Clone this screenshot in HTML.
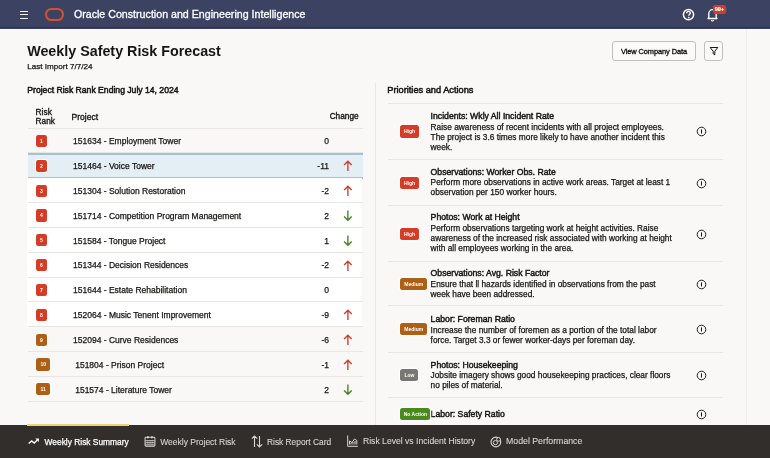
<!DOCTYPE html>
<html><head><meta charset="utf-8"><style>
html,body{margin:0;padding:0;}
body{width:770px;height:458px;position:relative;overflow:hidden;background:#f9f8f6;font-family:"Liberation Sans",sans-serif;}
.t{position:absolute;white-space:nowrap;}
#w{position:absolute;left:0;top:0;width:770px;height:458px;will-change:transform;}
</style></head><body><div id="w">
<div style="position:absolute;left:0px;top:0px;width:770px;height:28.5px;background:#3c4262;"></div>
<div style="position:absolute;left:0px;top:27.4px;width:770px;height:1.1px;background:#2d3250;"></div>
<div style="position:absolute;left:20.3px;top:10.6px;width:8px;height:1.15px;background:#f4f4f6;"></div>
<div style="position:absolute;left:20.3px;top:14.1px;width:8px;height:1.15px;background:#f4f4f6;"></div>
<div style="position:absolute;left:20.3px;top:17.6px;width:8px;height:1.15px;background:#f4f4f6;"></div>
<div style="position:absolute;left:44.8px;top:8.0px;width:19.1px;height:12.8px;box-sizing:border-box;border:2.2px solid #d4502f;border-radius:6.4px;"></div>
<div class="t " style="left:73.90px;top:7.85px;font-size:10.66px;line-height:13.32px;font-weight:400;color:#ffffff;-webkit-text-stroke:0.3px #fff;">Oracle Construction and Engineering Intelligence</div>
<svg style="position:absolute;left:682px;top:7.5px" width="13" height="13" viewBox="0 0 13 13"><circle cx="6.5" cy="6.6" r="5.1" fill="none" stroke="#fff" stroke-width="1.5"/><path d="M4.7 5.3 C4.7 4.0 5.5 3.4 6.5 3.4 C7.6 3.4 8.3 4.1 8.3 5 C8.3 6.2 6.8 6.3 6.8 7.7" fill="none" stroke="#fff" stroke-width="1.4"/><circle cx="6.8" cy="9.5" r="0.85" fill="#fff"/></svg>
<svg style="position:absolute;left:706px;top:8px" width="13" height="14" viewBox="0 0 13 14"><path d="M2 10.5 L2.8 9.3 L2.8 5.8 C2.8 3.5 4.5 1.6 6.5 1.6 C8.5 1.6 10.2 3.5 10.2 5.8 L10.2 9.3 L11 10.5 Z" fill="none" stroke="#fff" stroke-width="1.35" stroke-linejoin="round"/><path d="M5.3 11.8 C5.5 12.6 6 13 6.5 13 C7 13 7.5 12.6 7.7 11.8" fill="none" stroke="#fff" stroke-width="1.1"/></svg>
<div style="position:absolute;left:712.9px;top:5.4px;width:13px;height:8.2px;background:#d63b25;border-radius:2px;"></div>
<div class="t " style="left:719.40px;top:6.26px;font-size:5.6px;line-height:7.0px;font-weight:700;color:#fff;transform:translateX(-50%);-webkit-text-stroke:0.15px #fff;">99+</div>
<div style="position:absolute;left:746.0px;top:28.5px;width:1px;height:396px;background:#efedea;"></div>
<div class="t " style="left:27.20px;top:42.81px;font-size:14.3px;line-height:17.88px;font-weight:700;color:#161513;">Weekly Safety Risk Forecast</div>
<div class="t " style="left:27.30px;top:62.24px;font-size:8.09px;line-height:10.11px;font-weight:400;color:#161513;-webkit-text-stroke:0.25px #161513;">Last Import 7/7/24</div>
<div style="position:absolute;left:612.4px;top:41.3px;width:83.6px;height:19.4px;box-sizing:border-box;border:1.2px solid #c2bfbb;border-radius:3px;background:#fbfaf9;"></div>
<div class="t " style="left:621.00px;top:47.16px;font-size:7.45px;line-height:9.31px;font-weight:400;color:#161513;-webkit-text-stroke:0.35px #161513;letter-spacing:-0.1px;">View Company Data</div>
<div style="position:absolute;left:704.2px;top:41.3px;width:19.2px;height:19.4px;box-sizing:border-box;border:1.2px solid #c2bfbb;border-radius:3px;background:#fbfaf9;"></div>
<svg style="position:absolute;left:708.5px;top:46px" width="10" height="10" viewBox="0 0 10 10"><path d="M1.2 1.5 L8.8 1.5 L5.8 5.2 L5.8 8.8 L4.2 7.8 L4.2 5.2 Z" fill="none" stroke="#161513" stroke-width="1" stroke-linejoin="round"/></svg>
<div class="t " style="left:27.30px;top:84.73px;font-size:8.62px;line-height:10.77px;font-weight:400;color:#161513;-webkit-text-stroke:0.5px #161513;">Project Risk Rank Ending July 14, 2024</div>
<div style="position:absolute;left:374.8px;top:83px;width:1px;height:342px;background:#e9e7e4;"></div>
<div class="t " style="left:387.30px;top:84.54px;font-size:9.22px;line-height:11.53px;font-weight:400;color:#161513;-webkit-text-stroke:0.5px #161513;">Priorities and Actions</div>
<div style="position:absolute;left:388px;top:103.2px;width:335px;height:1px;background:#e9e7e4;"></div>
<div class="t " style="left:35.60px;top:106.69px;font-size:8.35px;line-height:10.44px;font-weight:400;color:#161513;-webkit-text-stroke:0.35px #161513;">Risk</div>
<div class="t " style="left:35.60px;top:116.89px;font-size:8.25px;line-height:10.31px;font-weight:400;color:#161513;-webkit-text-stroke:0.35px #161513;">Rank</div>
<div class="t " style="left:71.60px;top:111.73px;font-size:8.51px;line-height:10.64px;font-weight:400;color:#161513;-webkit-text-stroke:0.35px #161513;">Project</div>
<div class="t " style="right:411.40px;text-align:right;top:112.06px;font-size:8.27px;line-height:10.34px;font-weight:400;color:#161513;-webkit-text-stroke:0.35px #161513;">Change</div>
<div style="position:absolute;left:27.5px;top:127.6px;width:335px;height:1px;background:#e9e7e4;"></div>
<div style="position:absolute;left:27.5px;top:152.43px;width:335px;height:1px;background:#e9e7e4;"></div>
<div style="position:absolute;left:35.9px;top:134.9px;width:11.1px;height:12.2px;box-sizing:border-box;background:#d63b25;border-radius:2.2px;box-shadow:0 0 0 1px #fff;"></div>
<div class="t" style="left:35.9px;width:11.1px;top:134.9px;height:12.2px;line-height:12.2px;font-size:5px;font-weight:700;color:#fff;text-align:center;">1</div>
<div class="t " style="left:73.00px;top:136.24px;font-size:8.5px;line-height:10.62px;font-weight:400;color:#161513;-webkit-text-stroke:0.25px #161513;">151634 - Employment Tower</div>
<div class="t " style="right:441.00px;text-align:right;top:136.24px;font-size:8.5px;line-height:10.62px;font-weight:400;color:#161513;-webkit-text-stroke:0.25px #161513;">0</div>
<div style="position:absolute;left:27.5px;top:152.93px;width:335px;height:24.83px;background:#e4eff5;"></div>
<div style="position:absolute;left:27.5px;top:153.03px;width:335px;height:1.5px;background:#a2c3d3;"></div>
<div style="position:absolute;left:27.5px;top:177.16px;width:335px;height:1.5px;background:#a2c3d3;"></div>
<div style="position:absolute;left:35.9px;top:159.73000000000002px;width:11.1px;height:12.2px;box-sizing:border-box;background:#d63b25;border-radius:2.2px;box-shadow:0 0 0 1px #fff;"></div>
<div class="t" style="left:35.9px;width:11.1px;top:159.73000000000002px;height:12.2px;line-height:12.2px;font-size:5px;font-weight:700;color:#fff;text-align:center;">2</div>
<div class="t " style="left:73.00px;top:161.07px;font-size:8.5px;line-height:10.62px;font-weight:400;color:#161513;-webkit-text-stroke:0.25px #161513;">151464 - Voice Tower</div>
<div class="t " style="right:441.00px;text-align:right;top:161.07px;font-size:8.5px;line-height:10.62px;font-weight:400;color:#161513;-webkit-text-stroke:0.25px #161513;">-11</div>
<svg style="position:absolute;left:342.8px;top:160.43px" width="10" height="12" viewBox="0 0 10 12"><path d="M4.9 10.9 L4.9 1.2 M1.1 5.0 L4.9 1.2 L8.7 5.0" fill="none" stroke="#cc3f2a" stroke-width="1.35"/></svg>
<div style="position:absolute;left:27.3px;top:178.26px;width:335px;height:24.83px;background:#ffffff;"></div>
<div style="position:absolute;left:27.5px;top:202.08999999999997px;width:335px;height:1px;background:#e9e7e4;"></div>
<div style="position:absolute;left:35.9px;top:184.56px;width:11.1px;height:12.2px;box-sizing:border-box;background:#d63b25;border-radius:2.2px;box-shadow:0 0 0 1px #fff;"></div>
<div class="t" style="left:35.9px;width:11.1px;top:184.56px;height:12.2px;line-height:12.2px;font-size:5px;font-weight:700;color:#fff;text-align:center;">3</div>
<div class="t " style="left:73.00px;top:185.90px;font-size:8.5px;line-height:10.62px;font-weight:400;color:#161513;-webkit-text-stroke:0.25px #161513;">151304 - Solution Restoration</div>
<div class="t " style="right:441.00px;text-align:right;top:185.90px;font-size:8.5px;line-height:10.62px;font-weight:400;color:#161513;-webkit-text-stroke:0.25px #161513;">-2</div>
<svg style="position:absolute;left:342.8px;top:185.26px" width="10" height="12" viewBox="0 0 10 12"><path d="M4.9 10.9 L4.9 1.2 M1.1 5.0 L4.9 1.2 L8.7 5.0" fill="none" stroke="#cc3f2a" stroke-width="1.35"/></svg>
<div style="position:absolute;left:27.3px;top:203.08999999999997px;width:335px;height:24.83px;background:#ffffff;"></div>
<div style="position:absolute;left:27.5px;top:226.91999999999996px;width:335px;height:1px;background:#e9e7e4;"></div>
<div style="position:absolute;left:35.9px;top:209.39px;width:11.1px;height:12.2px;box-sizing:border-box;background:#d63b25;border-radius:2.2px;box-shadow:0 0 0 1px #fff;"></div>
<div class="t" style="left:35.9px;width:11.1px;top:209.39px;height:12.2px;line-height:12.2px;font-size:5px;font-weight:700;color:#fff;text-align:center;">4</div>
<div class="t " style="left:73.00px;top:210.73px;font-size:8.5px;line-height:10.62px;font-weight:400;color:#161513;-webkit-text-stroke:0.25px #161513;">151714 - Competition Program Management</div>
<div class="t " style="right:441.00px;text-align:right;top:210.73px;font-size:8.5px;line-height:10.62px;font-weight:400;color:#161513;-webkit-text-stroke:0.25px #161513;">2</div>
<svg style="position:absolute;left:342.8px;top:210.09px" width="10" height="12" viewBox="0 0 10 12"><path d="M4.9 0.6 L4.9 10.3 M1.1 6.5 L4.9 10.3 L8.7 6.5" fill="none" stroke="#43821f" stroke-width="1.35"/></svg>
<div style="position:absolute;left:27.3px;top:227.92px;width:335px;height:24.83px;background:#ffffff;"></div>
<div style="position:absolute;left:27.5px;top:251.75px;width:335px;height:1px;background:#e9e7e4;"></div>
<div style="position:absolute;left:35.9px;top:234.22px;width:11.1px;height:12.2px;box-sizing:border-box;background:#d63b25;border-radius:2.2px;box-shadow:0 0 0 1px #fff;"></div>
<div class="t" style="left:35.9px;width:11.1px;top:234.22px;height:12.2px;line-height:12.2px;font-size:5px;font-weight:700;color:#fff;text-align:center;">5</div>
<div class="t " style="left:73.00px;top:235.56px;font-size:8.5px;line-height:10.62px;font-weight:400;color:#161513;-webkit-text-stroke:0.25px #161513;">151584 - Tongue Project</div>
<div class="t " style="right:441.00px;text-align:right;top:235.56px;font-size:8.5px;line-height:10.62px;font-weight:400;color:#161513;-webkit-text-stroke:0.25px #161513;">1</div>
<svg style="position:absolute;left:342.8px;top:234.92px" width="10" height="12" viewBox="0 0 10 12"><path d="M4.9 0.6 L4.9 10.3 M1.1 6.5 L4.9 10.3 L8.7 6.5" fill="none" stroke="#43821f" stroke-width="1.35"/></svg>
<div style="position:absolute;left:27.3px;top:252.75px;width:335px;height:24.83px;background:#ffffff;"></div>
<div style="position:absolute;left:27.5px;top:276.58px;width:335px;height:1px;background:#e9e7e4;"></div>
<div style="position:absolute;left:35.9px;top:259.04999999999995px;width:11.1px;height:12.2px;box-sizing:border-box;background:#d63b25;border-radius:2.2px;box-shadow:0 0 0 1px #fff;"></div>
<div class="t" style="left:35.9px;width:11.1px;top:259.04999999999995px;height:12.2px;line-height:12.2px;font-size:5px;font-weight:700;color:#fff;text-align:center;">6</div>
<div class="t " style="left:73.00px;top:260.39px;font-size:8.5px;line-height:10.62px;font-weight:400;color:#161513;-webkit-text-stroke:0.25px #161513;">151344 - Decision Residences</div>
<div class="t " style="right:441.00px;text-align:right;top:260.39px;font-size:8.5px;line-height:10.62px;font-weight:400;color:#161513;-webkit-text-stroke:0.25px #161513;">-2</div>
<svg style="position:absolute;left:342.8px;top:259.75px" width="10" height="12" viewBox="0 0 10 12"><path d="M4.9 10.9 L4.9 1.2 M1.1 5.0 L4.9 1.2 L8.7 5.0" fill="none" stroke="#cc3f2a" stroke-width="1.35"/></svg>
<div style="position:absolute;left:27.3px;top:277.58px;width:335px;height:24.83px;background:#ffffff;"></div>
<div style="position:absolute;left:27.5px;top:301.40999999999997px;width:335px;height:1px;background:#e9e7e4;"></div>
<div style="position:absolute;left:35.9px;top:283.87999999999994px;width:11.1px;height:12.2px;box-sizing:border-box;background:#d63b25;border-radius:2.2px;box-shadow:0 0 0 1px #fff;"></div>
<div class="t" style="left:35.9px;width:11.1px;top:283.87999999999994px;height:12.2px;line-height:12.2px;font-size:5px;font-weight:700;color:#fff;text-align:center;">7</div>
<div class="t " style="left:73.00px;top:285.22px;font-size:8.5px;line-height:10.62px;font-weight:400;color:#161513;-webkit-text-stroke:0.25px #161513;">151644 - Estate Rehabilitation</div>
<div class="t " style="right:441.00px;text-align:right;top:285.22px;font-size:8.5px;line-height:10.62px;font-weight:400;color:#161513;-webkit-text-stroke:0.25px #161513;">0</div>
<div style="position:absolute;left:27.3px;top:302.40999999999997px;width:335px;height:24.83px;background:#ffffff;"></div>
<div style="position:absolute;left:27.5px;top:326.23999999999995px;width:335px;height:1px;background:#e9e7e4;"></div>
<div style="position:absolute;left:35.9px;top:308.7099999999999px;width:11.1px;height:12.2px;box-sizing:border-box;background:#d63b25;border-radius:2.2px;box-shadow:0 0 0 1px #fff;"></div>
<div class="t" style="left:35.9px;width:11.1px;top:308.7099999999999px;height:12.2px;line-height:12.2px;font-size:5px;font-weight:700;color:#fff;text-align:center;">8</div>
<div class="t " style="left:73.00px;top:310.05px;font-size:8.5px;line-height:10.62px;font-weight:400;color:#161513;-webkit-text-stroke:0.25px #161513;">152064 - Music Tenent Improvement</div>
<div class="t " style="right:441.00px;text-align:right;top:310.05px;font-size:8.5px;line-height:10.62px;font-weight:400;color:#161513;-webkit-text-stroke:0.25px #161513;">-9</div>
<svg style="position:absolute;left:342.8px;top:309.41px" width="10" height="12" viewBox="0 0 10 12"><path d="M4.9 10.9 L4.9 1.2 M1.1 5.0 L4.9 1.2 L8.7 5.0" fill="none" stroke="#cc3f2a" stroke-width="1.35"/></svg>
<div style="position:absolute;left:27.5px;top:351.07px;width:335px;height:1px;background:#e9e7e4;"></div>
<div style="position:absolute;left:35.9px;top:333.53999999999996px;width:11.1px;height:12.2px;box-sizing:border-box;background:#ad5f16;border-radius:2.2px;box-shadow:0 0 0 1px #fff;"></div>
<div class="t" style="left:35.9px;width:11.1px;top:333.53999999999996px;height:12.2px;line-height:12.2px;font-size:5px;font-weight:700;color:#fff;text-align:center;">9</div>
<div class="t " style="left:73.00px;top:334.88px;font-size:8.5px;line-height:10.62px;font-weight:400;color:#161513;-webkit-text-stroke:0.25px #161513;">152094 - Curve Residences</div>
<div class="t " style="right:441.00px;text-align:right;top:334.88px;font-size:8.5px;line-height:10.62px;font-weight:400;color:#161513;-webkit-text-stroke:0.25px #161513;">-6</div>
<svg style="position:absolute;left:342.8px;top:334.24px" width="10" height="12" viewBox="0 0 10 12"><path d="M4.9 10.9 L4.9 1.2 M1.1 5.0 L4.9 1.2 L8.7 5.0" fill="none" stroke="#cc3f2a" stroke-width="1.35"/></svg>
<div style="position:absolute;left:27.5px;top:375.8999999999999px;width:335px;height:1px;background:#e9e7e4;"></div>
<div style="position:absolute;left:35.9px;top:358.3699999999999px;width:14.6px;height:12.2px;box-sizing:border-box;background:#ad5f16;border-radius:2.2px;box-shadow:0 0 0 1px #fff;"></div>
<div class="t" style="left:35.9px;width:14.6px;top:358.3699999999999px;height:12.2px;line-height:12.2px;font-size:5px;font-weight:700;color:#fff;text-align:center;">10</div>
<div class="t " style="left:75.20px;top:359.71px;font-size:8.5px;line-height:10.62px;font-weight:400;color:#161513;-webkit-text-stroke:0.25px #161513;">151804 - Prison Project</div>
<div class="t " style="right:441.00px;text-align:right;top:359.71px;font-size:8.5px;line-height:10.62px;font-weight:400;color:#161513;-webkit-text-stroke:0.25px #161513;">-1</div>
<svg style="position:absolute;left:342.8px;top:359.07px" width="10" height="12" viewBox="0 0 10 12"><path d="M4.9 10.9 L4.9 1.2 M1.1 5.0 L4.9 1.2 L8.7 5.0" fill="none" stroke="#cc3f2a" stroke-width="1.35"/></svg>
<div style="position:absolute;left:27.5px;top:400.72999999999996px;width:335px;height:1px;background:#e9e7e4;"></div>
<div style="position:absolute;left:35.9px;top:383.19999999999993px;width:14.6px;height:12.2px;box-sizing:border-box;background:#ad5f16;border-radius:2.2px;box-shadow:0 0 0 1px #fff;"></div>
<div class="t" style="left:35.9px;width:14.6px;top:383.19999999999993px;height:12.2px;line-height:12.2px;font-size:5px;font-weight:700;color:#fff;text-align:center;">11</div>
<div class="t " style="left:75.20px;top:384.54px;font-size:8.5px;line-height:10.62px;font-weight:400;color:#161513;-webkit-text-stroke:0.25px #161513;">151574 - Literature Tower</div>
<div class="t " style="right:441.00px;text-align:right;top:384.54px;font-size:8.5px;line-height:10.62px;font-weight:400;color:#161513;-webkit-text-stroke:0.25px #161513;">2</div>
<svg style="position:absolute;left:342.8px;top:383.90px" width="10" height="12" viewBox="0 0 10 12"><path d="M4.9 0.6 L4.9 10.3 M1.1 6.5 L4.9 10.3 L8.7 6.5" fill="none" stroke="#43821f" stroke-width="1.35"/></svg>
<div class="t " style="left:430.60px;top:111.47px;font-size:8.68px;line-height:10.85px;font-weight:400;color:#161513;-webkit-text-stroke:0.45px #161513;">Incidents: Wkly All Incident Rate</div>
<div class="t " style="left:430.60px;top:121.72px;font-size:8.32px;line-height:10.4px;font-weight:400;color:#161513;-webkit-text-stroke:0.25px #161513;">Raise awareness of recent incidents with all project employees.</div>
<div class="t " style="left:430.60px;top:132.02px;font-size:8.32px;line-height:10.4px;font-weight:400;color:#161513;-webkit-text-stroke:0.25px #161513;">The project is 3.6 times more likely to have another incident this</div>
<div class="t " style="left:430.60px;top:142.32px;font-size:8.32px;line-height:10.4px;font-weight:400;color:#161513;-webkit-text-stroke:0.25px #161513;">week.</div>
<div style="position:absolute;left:388px;top:159.0px;width:335px;height:1px;background:#e9e7e4;"></div>
<div style="position:absolute;left:400.3px;top:125.44999999999999px;width:18.5px;height:12.2px;background:#d63b25;border-radius:2.5px;box-shadow:0 0 0 1.2px #fff;"></div>
<div class="t" style="left:400.3px;width:18.5px;top:125.45px;height:12.2px;line-height:12.2px;font-size:5.0px;font-weight:700;color:#fff;text-align:center;">High</div>
<svg style="position:absolute;left:696.0px;top:126.45px" width="11" height="11" viewBox="0 0 11 11"><circle cx="5.5" cy="5.5" r="4.3" fill="none" stroke="#161513" stroke-width="0.95"/><path d="M5.5 3.4 L5.5 7.5" stroke="#161513" stroke-width="1.0"/></svg>
<div class="t " style="left:430.60px;top:166.57px;font-size:8.68px;line-height:10.85px;font-weight:400;color:#161513;-webkit-text-stroke:0.45px #161513;">Observations: Worker Obs. Rate</div>
<div class="t " style="left:430.60px;top:176.82px;font-size:8.32px;line-height:10.4px;font-weight:400;color:#161513;-webkit-text-stroke:0.25px #161513;">Perform more observations in active work areas. Target at least 1</div>
<div class="t " style="left:430.60px;top:187.12px;font-size:8.32px;line-height:10.4px;font-weight:400;color:#161513;-webkit-text-stroke:0.25px #161513;">observation per 150 worker hours.</div>
<div style="position:absolute;left:388px;top:205.1px;width:335px;height:1px;background:#e9e7e4;"></div>
<div style="position:absolute;left:400.3px;top:176.65px;width:18.5px;height:12.2px;background:#d63b25;border-radius:2.5px;box-shadow:0 0 0 1.2px #fff;"></div>
<div class="t" style="left:400.3px;width:18.5px;top:176.65px;height:12.2px;line-height:12.2px;font-size:5.0px;font-weight:700;color:#fff;text-align:center;">High</div>
<svg style="position:absolute;left:696.0px;top:177.65px" width="11" height="11" viewBox="0 0 11 11"><circle cx="5.5" cy="5.5" r="4.3" fill="none" stroke="#161513" stroke-width="0.95"/><path d="M5.5 3.4 L5.5 7.5" stroke="#161513" stroke-width="1.0"/></svg>
<div class="t " style="left:430.60px;top:212.27px;font-size:8.68px;line-height:10.85px;font-weight:400;color:#161513;-webkit-text-stroke:0.45px #161513;">Photos: Work at Height</div>
<div class="t " style="left:430.60px;top:222.52px;font-size:8.32px;line-height:10.4px;font-weight:400;color:#161513;-webkit-text-stroke:0.25px #161513;">Perform observations targeting work at height activities. Raise</div>
<div class="t " style="left:430.60px;top:232.82px;font-size:8.32px;line-height:10.4px;font-weight:400;color:#161513;-webkit-text-stroke:0.25px #161513;">awareness of the increased risk associated with working at height</div>
<div class="t " style="left:430.60px;top:243.12px;font-size:8.32px;line-height:10.4px;font-weight:400;color:#161513;-webkit-text-stroke:0.25px #161513;">with all employees working in the area.</div>
<div style="position:absolute;left:388px;top:260.9px;width:335px;height:1px;background:#e9e7e4;"></div>
<div style="position:absolute;left:400.3px;top:227.6px;width:18.5px;height:12.2px;background:#d63b25;border-radius:2.5px;box-shadow:0 0 0 1.2px #fff;"></div>
<div class="t" style="left:400.3px;width:18.5px;top:227.60px;height:12.2px;line-height:12.2px;font-size:5.0px;font-weight:700;color:#fff;text-align:center;">High</div>
<svg style="position:absolute;left:696.0px;top:228.60px" width="11" height="11" viewBox="0 0 11 11"><circle cx="5.5" cy="5.5" r="4.3" fill="none" stroke="#161513" stroke-width="0.95"/><path d="M5.5 3.4 L5.5 7.5" stroke="#161513" stroke-width="1.0"/></svg>
<div class="t " style="left:430.60px;top:268.27px;font-size:8.68px;line-height:10.85px;font-weight:400;color:#161513;-webkit-text-stroke:0.45px #161513;">Observations: Avg. Risk Factor</div>
<div class="t " style="left:430.60px;top:278.52px;font-size:8.32px;line-height:10.4px;font-weight:400;color:#161513;-webkit-text-stroke:0.25px #161513;">Ensure that ll hazards identified in observations from the past</div>
<div class="t " style="left:430.60px;top:288.82px;font-size:8.32px;line-height:10.4px;font-weight:400;color:#161513;-webkit-text-stroke:0.25px #161513;">week have been addressed.</div>
<div style="position:absolute;left:388px;top:305.1px;width:335px;height:1px;background:#e9e7e4;"></div>
<div style="position:absolute;left:400.3px;top:277.59999999999997px;width:26.8px;height:12.2px;background:#ad5f16;border-radius:2.5px;box-shadow:0 0 0 1.2px #fff;"></div>
<div class="t" style="left:400.3px;width:26.8px;top:277.60px;height:12.2px;line-height:12.2px;font-size:5.0px;font-weight:700;color:#fff;text-align:center;">Medium</div>
<svg style="position:absolute;left:696.0px;top:278.60px" width="11" height="11" viewBox="0 0 11 11"><circle cx="5.5" cy="5.5" r="4.3" fill="none" stroke="#161513" stroke-width="0.95"/><path d="M5.5 3.4 L5.5 7.5" stroke="#161513" stroke-width="1.0"/></svg>
<div class="t " style="left:430.60px;top:314.27px;font-size:8.68px;line-height:10.85px;font-weight:400;color:#161513;-webkit-text-stroke:0.45px #161513;">Labor: Foreman Ratio</div>
<div class="t " style="left:430.60px;top:324.52px;font-size:8.32px;line-height:10.4px;font-weight:400;color:#161513;-webkit-text-stroke:0.25px #161513;">Increase the number of foremen as a portion of the total labor</div>
<div class="t " style="left:430.60px;top:334.82px;font-size:8.32px;line-height:10.4px;font-weight:400;color:#161513;-webkit-text-stroke:0.25px #161513;">force. Target 3.3 or fewer worker-days per foreman day.</div>
<div style="position:absolute;left:388px;top:351.6px;width:335px;height:1px;background:#e9e7e4;"></div>
<div style="position:absolute;left:400.3px;top:322.95px;width:26.8px;height:12.2px;background:#ad5f16;border-radius:2.5px;box-shadow:0 0 0 1.2px #fff;"></div>
<div class="t" style="left:400.3px;width:26.8px;top:322.95px;height:12.2px;line-height:12.2px;font-size:5.0px;font-weight:700;color:#fff;text-align:center;">Medium</div>
<svg style="position:absolute;left:696.0px;top:323.95px" width="11" height="11" viewBox="0 0 11 11"><circle cx="5.5" cy="5.5" r="4.3" fill="none" stroke="#161513" stroke-width="0.95"/><path d="M5.5 3.4 L5.5 7.5" stroke="#161513" stroke-width="1.0"/></svg>
<div class="t " style="left:430.60px;top:359.77px;font-size:8.68px;line-height:10.85px;font-weight:400;color:#161513;-webkit-text-stroke:0.45px #161513;">Photos: Housekeeping</div>
<div class="t " style="left:430.60px;top:370.02px;font-size:8.32px;line-height:10.4px;font-weight:400;color:#161513;-webkit-text-stroke:0.25px #161513;">Jobsite imagery shows good housekeeping practices, clear floors</div>
<div class="t " style="left:430.60px;top:380.32px;font-size:8.32px;line-height:10.4px;font-weight:400;color:#161513;-webkit-text-stroke:0.25px #161513;">no piles of material.</div>
<div style="position:absolute;left:388px;top:397.1px;width:335px;height:1px;background:#e9e7e4;"></div>
<div style="position:absolute;left:400.3px;top:368.95px;width:18.2px;height:12.2px;background:#7a7773;border-radius:2.5px;box-shadow:0 0 0 1.2px #fff;"></div>
<div class="t" style="left:400.3px;width:18.2px;top:368.95px;height:12.2px;line-height:12.2px;font-size:5.0px;font-weight:700;color:#fff;text-align:center;">Low</div>
<svg style="position:absolute;left:696.0px;top:369.95px" width="11" height="11" viewBox="0 0 11 11"><circle cx="5.5" cy="5.5" r="4.3" fill="none" stroke="#161513" stroke-width="0.95"/><path d="M5.5 3.4 L5.5 7.5" stroke="#161513" stroke-width="1.0"/></svg>
<div class="t " style="left:430.60px;top:409.27px;font-size:8.68px;line-height:10.85px;font-weight:400;color:#161513;-webkit-text-stroke:0.45px #161513;">Labor: Safety Ratio</div>
<div style="position:absolute;left:400.3px;top:408.0px;width:30.2px;height:12.2px;background:#4a8a1c;border-radius:2.5px;box-shadow:0 0 0 1.2px #fff;"></div>
<div class="t" style="left:400.3px;width:30.2px;top:408.00px;height:12.2px;line-height:12.2px;font-size:5.0px;font-weight:700;color:#fff;text-align:center;">No Action</div>
<svg style="position:absolute;left:696.0px;top:409.00px" width="11" height="11" viewBox="0 0 11 11"><circle cx="5.5" cy="5.5" r="4.3" fill="none" stroke="#161513" stroke-width="0.95"/><path d="M5.5 3.4 L5.5 7.5" stroke="#161513" stroke-width="1.0"/></svg>
<div style="position:absolute;left:0px;top:424.7px;width:770px;height:33.3px;background:#322e2b;"></div>
<div style="position:absolute;left:27.0px;top:424.0px;width:102.0px;height:2.3px;background:#f1d077;"></div>
<div class="t " style="left:44.60px;top:436.66px;font-size:8.38px;line-height:10.48px;font-weight:400;color:#ffffff;-webkit-text-stroke:0.25px #fff;">Weekly Risk Summary</div>
<div class="t " style="left:160.20px;top:436.53px;font-size:8.51px;line-height:10.64px;font-weight:400;color:#d9d6d2;-webkit-text-stroke:0.1px #d9d6d2;">Weekly Project Risk</div>
<div class="t " style="left:267.00px;top:436.67px;font-size:8.37px;line-height:10.46px;font-weight:400;color:#d9d6d2;-webkit-text-stroke:0.1px #d9d6d2;">Risk Report Card</div>
<div class="t " style="left:363.00px;top:436.45px;font-size:8.6px;line-height:10.75px;font-weight:400;color:#d9d6d2;-webkit-text-stroke:0.1px #d9d6d2;">Risk Level vs Incident History</div>
<div class="t " style="left:506.00px;top:436.30px;font-size:8.75px;line-height:10.94px;font-weight:400;color:#d9d6d2;-webkit-text-stroke:0.1px #d9d6d2;">Model Performance</div>
<svg style="position:absolute;left:28px;top:436px" width="12" height="10" viewBox="0 0 12 10"><path d="M0.7 7.6 L3.7 4.9 L6.2 7.1 L10.1 3.3" fill="none" stroke="#fff" stroke-width="1.35"/><path d="M7.4 2.4 L10.9 2.4 L10.9 5.9 Z" fill="#fff"/></svg>
<svg style="position:absolute;left:144px;top:434.6px" width="12" height="12" viewBox="0 0 12 12"><rect x="1.1" y="2.2" width="9.8" height="8.9" rx="0.9" fill="none" stroke="#d9d6d2" stroke-width="1.1"/><circle cx="3.9" cy="2.5" r="1.15" fill="#d9d6d2"/><circle cx="7.9" cy="2.5" r="1.15" fill="#d9d6d2"/><path d="M1.6 4.1 H10.4" stroke="#322e2b" stroke-width="0.9"/><path d="M1.6 5.6 H10.4 M1.6 7.4 H10.4 M1.6 9.2 H10.4" stroke="#d9d6d2" stroke-width="0.8"/><path d="M3.9 5 V10.6 M6 5 V10.6 M8.1 5 V10.6" stroke="#d9d6d2" stroke-width="0.6" opacity="0.6"/></svg>
<svg style="position:absolute;left:251px;top:434.5px" width="12" height="13" viewBox="0 0 12 13"><path d="M3.5 12 L3.5 1 M0.8 3.7 L3.5 1 L6.2 3.7 M8.5 1 L8.5 12 M5.8 9.3 L8.5 12 L11.2 9.3" fill="none" stroke="#d9d6d2" stroke-width="1.1"/></svg>
<svg style="position:absolute;left:346.5px;top:435px" width="11" height="12" viewBox="0 0 11 12"><path d="M0.7 0.5 L0.7 11.3 L10.8 11.3" fill="none" stroke="#d9d6d2" stroke-width="1"/><path d="M2.5 9.5 L2.5 6 L5 7.5 L7.5 4 L9.8 5.5 L9.8 9.5" fill="none" stroke="#d9d6d2" stroke-width="1"/><path d="M4 9.5 L4 8 M6 9.5 L6 7 M8 9.5 L8 6" stroke="#d9d6d2" stroke-width="1"/></svg>
<svg style="position:absolute;left:489.5px;top:435.5px" width="12" height="12" viewBox="0 0 12 12"><circle cx="5.9" cy="6" r="4.85" fill="none" stroke="#d9d6d2" stroke-width="1.15"/><circle cx="5.4" cy="6.6" r="2.1" fill="none" stroke="#d9d6d2" stroke-width="1"/><circle cx="8.5" cy="3.4" r="1.9" fill="#322e2b" stroke="#d9d6d2" stroke-width="1"/></svg>
</div></body></html>
